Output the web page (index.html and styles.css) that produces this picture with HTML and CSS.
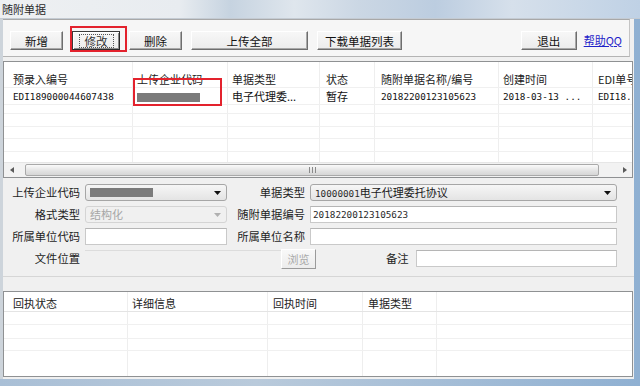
FILE: index.html
```html
<!DOCTYPE html>
<html lang="zh-CN">
<head>
<meta charset="utf-8">
<title>随附单据</title>
<link rel="stylesheet" href="styles.css">
</head>
<body>
<div class="page">
  <div class="titlebar"><span class="title">随附单据</span></div>
  <div class="window">
    <div class="toolbar">
      <button class="btn w1">新增</button>
      <button class="btn w2 focus"><span class="ring">修改</span></button>
      <button class="btn w3">删除</button>
      <button class="btn w4">上传全部</button>
      <button class="btn w5">下载单据列表</button>
      <span class="spacer"></span>
      <button class="btn w6">退出</button>
      <a class="help" href="#">帮助QQ</a>
    </div>

    <div class="grid grid1">
      <div class="g1row head">
        <div class="c">预录入编号</div>
        <div class="c">上传企业代码</div>
        <div class="c">单据类型</div>
        <div class="c">状态</div>
        <div class="c">随附单据名称/编号</div>
        <div class="c">创建时间</div>
        <div class="c">EDI单号</div>
      </div>
      <div class="g1row data">
        <div class="c mono">EDI189000044607438</div>
        <div class="c"><span class="masked"></span></div>
        <div class="c">电子代理委...</div>
        <div class="c">暂存</div>
        <div class="c mono">20182200123105623</div>
        <div class="c mono">2018-03-13 ...</div>
        <div class="c mono">EDI18.</div>
      </div>
      <div class="g1row"><div class="c"></div><div class="c"></div><div class="c"></div><div class="c"></div><div class="c"></div><div class="c"></div><div class="c"></div></div>
      <div class="g1row"><div class="c"></div><div class="c"></div><div class="c"></div><div class="c"></div><div class="c"></div><div class="c"></div><div class="c"></div></div>
      <div class="g1row"><div class="c"></div><div class="c"></div><div class="c"></div><div class="c"></div><div class="c"></div><div class="c"></div><div class="c"></div></div>
      <div class="g1row"><div class="c"></div><div class="c"></div><div class="c"></div><div class="c"></div><div class="c"></div><div class="c"></div><div class="c"></div></div>
      <div class="g1row last"><div class="c"></div><div class="c"></div><div class="c"></div><div class="c"></div><div class="c"></div><div class="c"></div><div class="c"></div></div>
      <div class="hscroll">
        <span class="arrow"><svg width="5" height="6" viewBox="0 0 5 6"><path d="M4 0 L0 3 L4 6 Z" fill="#5a5a5a"/></svg></span>
        <span class="track">
          <span class="thumb"><svg width="7" height="6" viewBox="0 0 7 6"><path d="M0.5 0 V6 M3.5 0 V6 M6.5 0 V6" stroke="#8a8a8a" stroke-width="1"/></svg></span>
        </span>
        <span class="arrow"><svg width="5" height="6" viewBox="0 0 5 6"><path d="M1 0 L5 3 L1 6 Z" fill="#5a5a5a"/></svg></span>
      </div>
    </div>

    <div class="form">
      <label class="lbl">上传企业代码</label>
      <div class="combo"><span class="masked m2"></span><svg class="caret" width="7" height="4" viewBox="0 0 7 4"><path d="M0 0 H7 L3.5 4 Z" fill="#111"/></svg></div>
      <label class="lbl">单据类型</label>
      <div class="combo"><span class="val"><span class="mono">10000001</span>电子代理委托协议</span><svg class="caret" width="7" height="4" viewBox="0 0 7 4"><path d="M0 0 H7 L3.5 4 Z" fill="#111"/></svg></div>

      <label class="lbl">格式类型</label>
      <div class="combo dis"><span class="val">结构化</span><svg class="caret" width="7" height="4" viewBox="0 0 7 4"><path d="M0 0 H7 L3.5 4 Z" fill="#b0b0b0"/></svg></div>
      <label class="lbl">随附单据编号</label>
      <div class="input"><span class="val mono">20182200123105623</span></div>

      <label class="lbl">所属单位代码</label>
      <div class="input"></div>
      <label class="lbl">所属单位名称</label>
      <div class="input"></div>

      <label class="lbl">文件位置</label>
      <div class="filerow">
        <div class="filefield"></div>
        <button class="browse">浏览</button>
        <label class="lbl note">备注</label>
        <div class="input grow"></div>
      </div>
    </div>

    <div class="grid grid2">
      <div class="g2row head">
        <div class="c">回执状态</div>
        <div class="c">详细信息</div>
        <div class="c">回执时间</div>
        <div class="c">单据类型</div>
        <div class="c"></div>
      </div>
      <div class="g2row"><div class="c"></div><div class="c"></div><div class="c"></div><div class="c"></div><div class="c"></div></div>
      <div class="g2row"><div class="c"></div><div class="c"></div><div class="c"></div><div class="c"></div><div class="c"></div></div>
      <div class="g2row"><div class="c"></div><div class="c"></div><div class="c"></div><div class="c"></div><div class="c"></div></div>
      <div class="g2row last"><div class="c"></div><div class="c"></div><div class="c"></div><div class="c"></div><div class="c"></div></div>
    </div>
  </div>

  <div class="mark mark-edit"></div>
  <div class="mark mark-code"></div>
</div>
</body>
</html>
```

FILE: styles.css
```css
* { box-sizing: border-box; margin: 0; padding: 0; }

body {
  width: 640px;
  height: 386px;
  overflow: hidden;
  background: linear-gradient(90deg, #a9bfd6 0%, #b9cadb 40%, #8fb0d2 100%);
  font-family: "Noto Sans CJK SC", "Noto Sans", sans-serif;
  font-size: 11px;
  color: #1a1a1a;
}

.page { position: relative; width: 640px; height: 386px; }

.mono { font-family: "DejaVu Sans Mono", "Liberation Mono", monospace; font-size: 9.3px; color: #2a2a2a; }

/* title bar */
.titlebar {
  height: 19px;
  background: linear-gradient(90deg, #eef0f2 0%, #e8ecf0 28%, #c6d3e0 36%, #dfe6ed 46%, #cbd7e4 56%, #bccde0 68%, #d6e0eb 80%, #bfd1e5 100%);
  border-bottom: 1px solid #c4cbd3;
  display: flex;
  align-items: center;
  padding-left: 2px;
}
.title { font-size: 11px; color: #2a2a2a; line-height: 18px; }

/* window */
.window {
  width: 634px;
  height: 360px;
  background: #f0f0f0;
  border-left: 3px solid #cdd4db;
  display: flex;
  flex-direction: column;
}

/* toolbar */
.toolbar {
  height: 38px;
  margin-right: 4px;
  background: #f6f6f6;
  border-top: 1px solid #a8a8a8;
  border-bottom: 1px solid #b4b4b4;
  border-right: 1px solid #c4c4c4;
  display: flex;
  align-items: flex-start;
  gap: 9px;
  padding: 11px 7px 0 7px;
}
.btn {
  height: 19px;
  font-family: inherit;
  font-size: 11.5px;
  color: #111;
  background: linear-gradient(#f7f7f7, #ececec);
  border: 1px solid;
  border-color: #ffffff #6e6e6e #6e6e6e #ffffff;
  box-shadow: inset -1px -1px 0 #a8a8a8;
  line-height: 16px;
  display: flex;
  align-items: center;
  justify-content: center;
}
.w1 { width: 53px; }
.w2 { width: 48px; }
.w3 { width: 53px; }
.w4 { width: 117px; }
.w5 { width: 85px; }
.w6 { width: 56px; }
.btn.focus { border-color: #3a3a3a #2a2a2a #2a2a2a #3a3a3a; box-shadow: inset 1px 1px 0 #fff, inset -1px -1px 0 #8a8a8a; }
.ring { border: 1px dotted #555; padding: 0 5px; line-height: 12px; color: #333; }
.spacer { flex: 1; }
.help {
  margin-left: -2px;
  font-size: 11px;
  line-height: 18px;
  color: #1f22c8;
  text-decoration: underline;
}

/* grids */
.grid {
  background: #fff;
  border: 1px solid #8f9193;
  margin-right: 1px;
  display: grid;
}
.grid1 {
  margin-top: 4px;
  height: 117px;
  grid-template-rows: 26px 17px 9px 13px 12px 13px 10px 15px;
}
.g1row, .g2row { display: grid; border-bottom: 1px solid #f0f0f0; }
.g1row { grid-template-columns: 129px 95px 92px 55px 124px 94px 1fr; }
.g1row.last, .g2row.last { border-bottom: none; }
.c {
  border-right: 1px solid #eeeeee;
  padding-left: 4px;
  white-space: nowrap;
  overflow: hidden;
}
.c:last-child { border-right: none; }
.g1row.head .c { padding-top: 10px; line-height: 15px; color: #222; }
.g1row.data .c { line-height: 17px; color: #111; }
.g1row .c:nth-child(1) { padding-left: 9px; }
.g1row .c:nth-child(4) { padding-left: 6px; }
.g1row .c:nth-child(5) { padding-left: 6px; }
.g1row .c:nth-child(7) { padding-left: 5px; }
.masked {
  display: inline-block;
  width: 63px;
  height: 9px;
  background: #7b7b7b;
  vertical-align: middle;
  margin-top: -2px;
}

.hscroll {
  display: flex;
  align-items: stretch;
  background: #f2f2f2;
  border-top: 1px solid #e6e6e6;
}
.arrow {
  width: 16px;
  display: flex;
  align-items: center;
  justify-content: center;
}
.track { flex: 1; display: flex; padding: 1px 17px 1px 5px; }
.thumb {
  flex: 1;
  border: 1px solid #a9a9a9;
  border-radius: 2px;
  background: linear-gradient(#fafafa, #e2e2e2 60%, #d6d6d6);
  display: flex;
  align-items: center;
  justify-content: center;
}

/* form */
.form {
  height: 99px;
  padding-top: 6px;
  display: grid;
  grid-template-columns: 77px 142px 73px 307px;
  grid-template-rows: repeat(4, 17px);
  column-gap: 5px;
  row-gap: 5px;
  align-content: start;
  border-bottom: 1px solid #d6d6d6;
}
.lbl {
  text-align: right;
  white-space: nowrap;
  line-height: 17px;
  font-size: 11.3px;
  color: #1e1e1e;
}
.combo {
  position: relative;
  border: 1px solid #a6a6a6;
  border-radius: 3px;
  background: linear-gradient(#f6f6f6, #e4e4e4);
  display: flex;
  align-items: center;
  padding-left: 4px;
}
.combo .caret { position: absolute; right: 5px; top: 6px; }
.combo .masked.m2 { margin-top: 0; }
.combo.dis { background: #f0f0f0; border-color: #d4d4d4; color: #a6a6a6; }
.val { line-height: 15px; white-space: nowrap; }
.input {
  background: #fff;
  border: 1px solid #c9c9c9;
  border-top-color: #b5b5b5;
  display: flex;
  align-items: center;
  padding-left: 2px;
}
.filerow { grid-column: 2 / span 3; display: flex; align-items: stretch; }
.filefield { width: 196px; border-top: 1px solid #dcdcdc; }
.browse {
  width: 35px;
  height: 20px;
  margin-top: -1px;
  font-family: inherit;
  font-size: 11px;
  color: #a9a9a9;
  background: linear-gradient(#f8f8f8, #ececec);
  border: 1px solid;
  border-color: #ffffff #9a9a9a #9a9a9a #ffffff;
}
.lbl.note { width: 24px; margin-left: 70px; text-align: left; }
.input.grow { flex: 1; margin-left: 6px; }

/* receipt grid */
.grid2 {
  margin-top: 14px;
  height: 86px;
  grid-template-rows: 20px 13px 14px 12px 1fr;
}
.g2row { grid-template-columns: 124px 140px 95px 74px 1fr; }
.g2row.head { border-bottom: 1px solid #e4e4e4; }
.g2row.head .c { padding-top: 4px; line-height: 15px; color: #222; }
.g2row .c:nth-child(1) { padding-left: 9px; }
.g2row .c:nth-child(3) { padding-left: 5px; }
.g2row .c:nth-child(4) { padding-left: 5px; }

/* red annotation marks */
.mark { position: absolute; border: 2px solid #e3222d; }
.mark-edit { left: 70px; top: 26px; width: 57px; height: 26px; }
.mark-code { left: 133px; top: 78px; width: 89px; height: 28px; }
```
